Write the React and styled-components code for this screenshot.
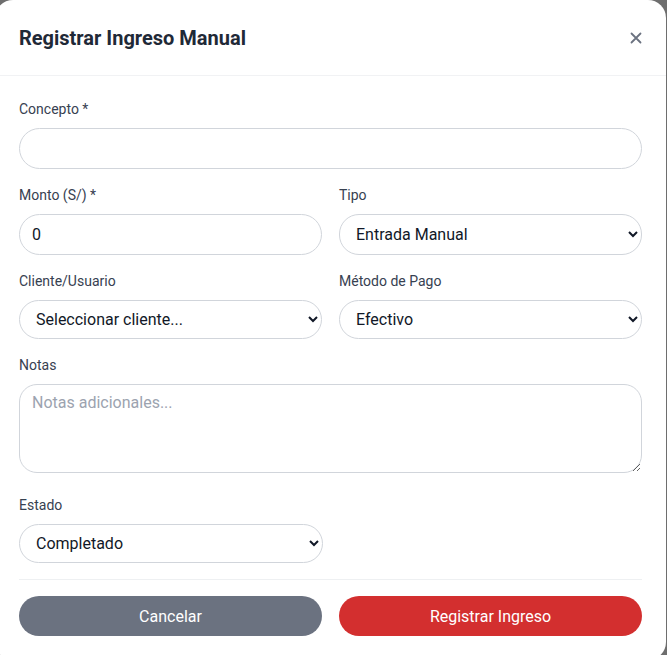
import React from "react";
import styled, { createGlobalStyle } from "styled-components";

const Global = createGlobalStyle`
  html, body { margin: 0; padding: 0; overflow: hidden; }
  body {
    background: #6e6e6e;
    font-family: Roboto, "Liberation Sans", sans-serif;
    width: 667px;
    height: 655px;
  }
  * { box-sizing: border-box; }
`;

const Modal = styled.div`
  width: 671px;
  margin: 0 0 0 -5px;
  background: #ffffff;
  border-radius: 18px;
  display: flex;
  flex-direction: column;
`;

const Header = styled.div`
  display: flex;
  align-items: center;
  justify-content: space-between;
  padding: 24px 24px 23px 24px;
  border-bottom: 1px solid #f1f2f4;
`;

const Title = styled.h2`
  margin: 0;
  font-size: 20px;
  line-height: 28px;
  font-weight: 700;
  color: #1f2937;
`;

const CloseButton = styled.button`
  border: 0;
  background: none;
  padding: 0;
  width: 14px;
  height: 20px;
  display: flex;
  align-items: center;
  justify-content: center;
  color: #6b7280;
  margin-right: -1px;
  cursor: pointer;
`;

const Body = styled.form`
  display: flex;
  flex-direction: column;
  gap: 16px;
  padding: 23px 24px 24px 24px;
`;

const Row = styled.div`
  display: grid;
  grid-template-columns: 1fr 1fr;
  column-gap: 17px;
`;

const Field = styled.div`
  display: flex;
  flex-direction: column;
  min-width: 0;
`;

const Label = styled.label`
  font-size: 14px;
  line-height: 20px;
  font-weight: 400;
  color: #374151;
  margin-bottom: 9px;
`;

const controlBase = `
  width: 100%;
  font-family: Roboto, "Liberation Sans", sans-serif;
  font-size: 16px;
  color: #111827;
  background: #ffffff;
  border: 1px solid #d1d5db;
  outline: none;
`;

const TextInput = styled.input`
  ${controlBase}
  height: 41px;
  border-radius: 21px;
  padding: 0 12px;
`;

const Select = styled.select`
  ${controlBase}
  height: ${(p) => (p.$tall ? "41px" : "39px")};
  border-radius: 20px;
  padding: 0 12px;
`;

const TextArea = styled.textarea`
  ${controlBase}
  display: block;
  height: 89px;
  border-radius: 18px;
  padding: 8px 12px;
  resize: vertical;
  margin-bottom: 6px;
  &::placeholder { color: #9ca3af; }
`;

const Divider = styled.hr`
  margin: 0;
  border: 0;
  border-top: 1px solid #eef0f2;
`;

const Footer = styled.div`
  display: grid;
  grid-template-columns: 1fr 1fr;
  column-gap: 17px;
`;

const Button = styled.button`
  height: 40px;
  border: 0;
  border-radius: 20px;
  font-family: Roboto, "Liberation Sans", sans-serif;
  font-size: 16px;
  font-weight: 400;
  color: #ffffff;
  background: ${(p) => (p.$variant === "primary" ? "#d32f2f" : "#6b7280")};
  cursor: pointer;
`;

const Half = styled.div`
  width: 304px;
`;

export default function App() {
  return (
    <>
      <Global />
      <Modal>
        <Header>
          <Title>Registrar Ingreso Manual</Title>
          <CloseButton aria-label="Cerrar">
            <svg width="12" height="12" viewBox="0 0 12 12" fill="none">
              <path d="M1.5 1.5 L10.5 10.5 M10.5 1.5 L1.5 10.5" stroke="currentColor" strokeWidth="1.8" strokeLinecap="round" />
            </svg>
          </CloseButton>
        </Header>
        <Body onSubmit={(e) => e.preventDefault()}>
          <Field>
            <Label>Concepto *</Label>
            <TextInput type="text" />
          </Field>
          <Row>
            <Field>
              <Label>Monto (S/) *</Label>
              <TextInput type="number" defaultValue="0" />
            </Field>
            <Field>
              <Label>Tipo</Label>
              <Select $tall defaultValue="manual">
                <option value="manual">Entrada Manual</option>
              </Select>
            </Field>
          </Row>
          <Row>
            <Field>
              <Label>Cliente/Usuario</Label>
              <Select defaultValue="">
                <option value="">Seleccionar cliente...</option>
              </Select>
            </Field>
            <Field>
              <Label>Método de Pago</Label>
              <Select defaultValue="efectivo">
                <option value="efectivo">Efectivo</option>
              </Select>
            </Field>
          </Row>
          <Field>
            <Label>Notas</Label>
            <TextArea placeholder="Notas adicionales..." />
          </Field>
          <Field>
            <Label>Estado</Label>
            <Half>
              <Select defaultValue="completado">
                <option value="completado">Completado</option>
              </Select>
            </Half>
          </Field>
          <Divider />
          <Footer>
            <Button type="button">Cancelar</Button>
            <Button type="submit" $variant="primary">Registrar Ingreso</Button>
          </Footer>
        </Body>
      </Modal>
    </>
  );
}
